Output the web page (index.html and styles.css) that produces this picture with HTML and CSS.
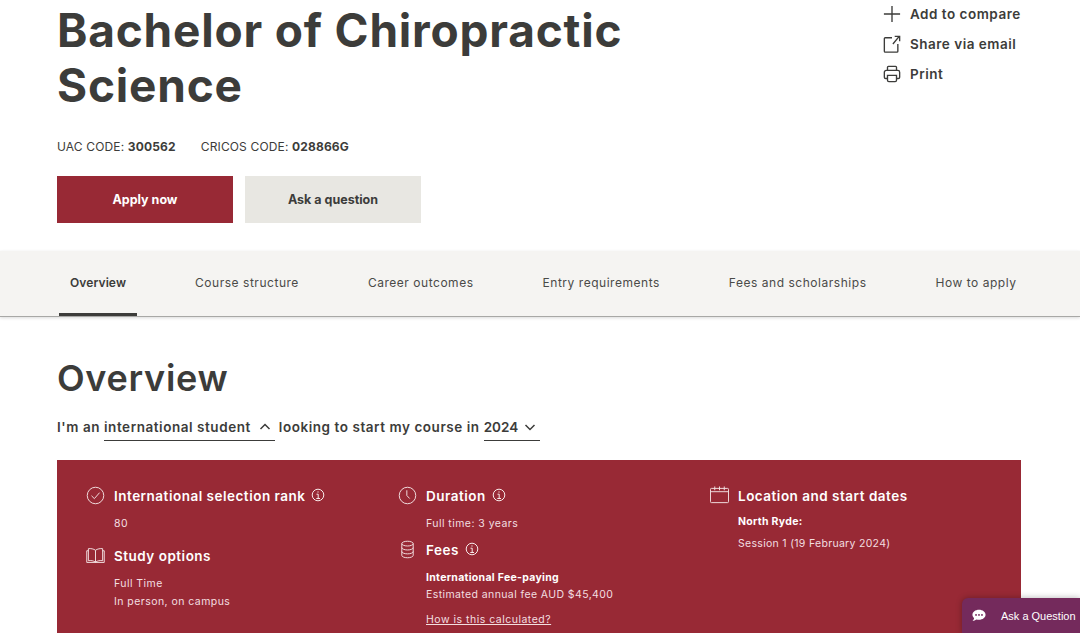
FILE: index.html
```html
<html>
  <head>
    <meta name="viewport" content="width=device-width,initial-scale=1">
    <link rel="stylesheet" href="styles.css">
  </head>

  <body>
    <header class="course_head">
      <div class="course_intro">
        <h1>Bachelor of Chiropractic Science</h1>
        <p class="codes">
          <span>UAC CODE: <b>300562</b></span>
          <span>CRICOS CODE: <b>028866G</b></span>
        </p>
        <div class="buttons">
          <a class="btn btn_primary">Apply now</a>
          <a class="btn btn_secondary">Ask a question</a>
        </div>
      </div>
      <ul class="actions">
        <li>
          <svg viewBox="0 0 20 20"><path d="M10 1v18M1 10h18"/></svg>
          Add to compare
        </li>
        <li>
          <svg viewBox="0 0 20 20"><path d="M10 3H2.500a1 1 0 0 0-1 1v14a1 1 0 0 0 1 1h13a1 1 0 0 0 1-1v-8M11 10l7-8.500M13 1.500h5.500V7"/></svg>
          Share via email
        </li>
        <li>
          <svg viewBox="0 0 20 20"><path d="M5 6V2.500a1 1 0 0 1 1-1h8a1 1 0 0 1 1 1V6M5 15H3a1.500 1.500 0 0 1-1.500-1.500V8A2 2 0 0 1 3.500 6h13a2 2 0 0 1 2 2v5.500A1.500 1.500 0 0 1 17 15h-2M5 11.500h10V17a1.500 1.500 0 0 1-1.500 1.500h-7A1.500 1.500 0 0 1 5 17z"/></svg>
          Print
        </li>
      </ul>
    </header>

    <nav class="tabs">
      <a class="tab tab_active">Overview</a>
      <a class="tab">Course structure</a>
      <a class="tab">Career outcomes</a>
      <a class="tab">Entry requirements</a>
      <a class="tab">Fees and scholarships</a>
      <a class="tab">How to apply</a>
    </nav>

    <main class="overview">
      <h2>Overview</h2>
      <p class="chooser">
        I'm an
        <span class="select">international student
          <svg viewBox="0 0 12 8"><path d="M1.500 6L6 1.500 10.500 6"/></svg>
        </span>
        looking to start my course in
        <span class="select select_year">2024
          <svg viewBox="0 0 12 8"><path d="M1.500 2L6 6.500 10.500 2"/></svg>
        </span>
      </p>

      <section class="panel">
        <div class="panel_col">
          <div class="fact">
            <svg class="fact_icon" viewBox="0 0 20 20"><circle cx="10" cy="10" r="8.700"/><path d="M5.800 10.300l3 3 5.500-6.300"/></svg>
            <h3>International selection rank <svg class="info" viewBox="0 0 14 14"><circle cx="7" cy="7" r="5.800"/><path d="M5.500 6.200H7.200V10.500M5.300 10.500H9M7 3.400v1.200"/></svg></h3>
            <p>80</p>
          </div>
          <div class="fact">
            <svg class="fact_icon" viewBox="0 0 20 20"><path d="M10 4.500C8 3 5 2.500 2.500 2.800V15.500C5 15 8 15.500 10 17C12 15.500 15 15 17.500 15.500V2.800C15 2.500 12 3 10 4.500ZM10 4.500V17M2.500 5H.8V17.300H19.200V5H17.500"/></svg>
            <h3>Study options</h3>
            <p>Full Time</p>
            <p class="line">In person, on campus</p>
          </div>
        </div>

        <div class="panel_col">
          <div class="fact">
            <svg class="fact_icon" viewBox="0 0 20 20"><circle cx="10" cy="10" r="8.700"/><path d="M9.300 4.500V10l3 3.200"/></svg>
            <h3>Duration <svg class="info" viewBox="0 0 14 14"><circle cx="7" cy="7" r="5.800"/><path d="M5.500 6.200H7.200V10.500M5.300 10.500H9M7 3.400v1.200"/></svg></h3>
            <p>Full time: 3 years</p>
          </div>
          <div class="fact fact_tight">
            <svg class="fact_icon" viewBox="0 0 20 20"><ellipse cx="10" cy="3.800" rx="6" ry="2.500"/><path d="M4 3.800V16.200C4 17.600 6.700 18.700 10 18.700S16 17.600 16 16.200V3.800M4 8C4 9.400 6.700 10.500 10 10.500S16 9.400 16 8M4 12.100C4 13.500 6.700 14.600 10 14.600S16 13.500 16 12.100"/></svg>
            <h3>Fees <svg class="info" viewBox="0 0 14 14"><circle cx="7" cy="7" r="5.800"/><path d="M5.500 6.200H7.200V10.500M5.300 10.500H9M7 3.400v1.200"/></svg></h3>
            <p class="strong">International Fee-paying</p>
            <p class="fee">Estimated annual fee AUD $45,400</p>
            <p class="calc"><a>How is this calculated?</a></p>
          </div>
        </div>

        <div class="panel_col">
          <div class="fact">
            <svg class="fact_icon" viewBox="0 0 20 20"><path d="M1.500 2.500h17a1 1 0 0 1 1 1v13a1 1 0 0 1-1 1h-17a1 1 0 0 1-1-1v-13a1 1 0 0 1 1-1zM.5 6h19M5 .5v4M10 .5v4M15 .5v4"/></svg>
            <h3>Location and start dates</h3>
            <p class="strong campus">North Ryde:</p>
            <p class="session">Session 1 (19 February 2024)</p>
          </div>
        </div>
      </section>
    </main>

    <a class="chat">
      <svg viewBox="0 0 16 14"><path d="M8 .5C3.800.5.500 3 .500 6.200c0 1.500.7 2.800 1.900 3.800-.2 1.200-1 2.300-1.900 3.200 1.700-.1 3.300-.7 4.500-1.700 1 .3 1.900.4 3 .4 4.200 0 7.500-2.600 7.500-5.700S12.200.5 8 .5z"/><circle class="dot" cx="4.600" cy="6.300" r="1.100"/><circle class="dot" cx="8" cy="6.300" r="1.100"/><circle class="dot" cx="11.400" cy="6.300" r="1.100"/></svg>
      Ask a Question
    </a>
  </body>
</html>
```

FILE: styles.css
```css
html, body {
    height: 633px;
    overflow: hidden;
}
body {
    margin: 0;
    font-family: 'Inter', 'Liberation Sans', sans-serif;
    color: #3c3c3a;
}
h1, h2, h3, p, ul {
    margin: 0;
    padding: 0;
}

/* top part */
.course_head {
    display: flex;
    justify-content: space-between;
    height: 251px;
    padding: 3px 59px 0 57px;
    box-sizing: border-box;
}
.course_intro {
    width: 640px;
}
h1 {
    font-size: 46px;
    line-height: 55px;
    font-weight: 700;
    letter-spacing: 0.8px;
}
.codes {
    display: flex;
    gap: 25px;
    margin-top: 26px;
    font-size: 12px;
    line-height: 16px;
    letter-spacing: 0.15px;
}
.codes b {
    font-weight: 700;
}
.buttons {
    display: flex;
    gap: 12px;
    margin-top: 21px;
}
.btn {
    display: flex;
    align-items: center;
    justify-content: center;
    width: 176px;
    height: 47px;
    font-size: 12.500px;
    font-weight: 700;
}
.btn_primary {
    background: #982935;
    color: #fff;
}
.btn_secondary {
    background: #e8e7e2;
}
.actions {
    list-style: none;
    width: 138px;
    margin-top: -4px;
}
.actions li {
    display: flex;
    align-items: center;
    gap: 9px;
    height: 30px;
    font-size: 13.500px;
    font-weight: 600;
    letter-spacing: 0.5px;
    white-space: nowrap;
}
.actions svg {
    width: 18px;
    height: 18px;
    flex: none;
    fill: none;
    stroke: #3c3c3a;
    stroke-width: 1.500;
}

/* tabs */
.tabs {
    display: flex;
    gap: 47px;
    height: 65px;
    padding-left: 59px;
    background: #f5f4f2;
    border-bottom: 1px solid #a8a8a6;
    box-shadow: 0 1px 3px rgba(0, 0, 0, 0.15);
}
.tab {
    display: flex;
    align-items: center;
    padding: 0 11px 2px;
    margin-bottom: 1px;
    font-size: 12px;
    letter-spacing: 0.53px;
    color: #4a4a48;
    white-space: nowrap;
}
.tab_active {
    font-weight: 600;
    letter-spacing: 0.1px;
    color: #3c3c3a;
    border-bottom: 3px solid #3c3c3a;
    margin-bottom: 0;
    padding-top: 1px;
    padding-bottom: 0;
}

/* overview */
.overview {
    padding: 0 59px 0 57px;
}
h2 {
    margin-top: 39px;
    font-size: 36px;
    line-height: 44px;
    font-weight: 600;
    letter-spacing: 0.7px;
}
.chooser {
    display: flex;
    gap: 4px;
    margin-top: 17px;
    font-size: 13.500px;
    line-height: 20px;
    font-weight: 600;
    letter-spacing: 0.55px;
}
.select {
    display: flex;
    align-items: center;
    gap: 7px;
    padding-bottom: 3px;
    padding-right: 4px;
    border-bottom: 1.500px solid #3c3c3a;
}
.select_year {
    gap: 5px;
    letter-spacing: 0;
}
.select svg {
    width: 12px;
    height: 8px;
    fill: none;
    stroke: #3c3c3a;
    stroke-width: 1.500;
    margin-left: 1px;
}
.panel {
    display: grid;
    grid-template-columns: 312px 312px 1fr;
    height: 173px;
    box-sizing: border-box;
    margin-top: 19px;
    padding: 26px 29px 0;
    background: #982935;
    color: #fff;
}
.fact {
    position: relative;
    padding-left: 28px;
    margin-bottom: 17px;
}
.fact_tight {
    margin-top: -6px;
}
.fact_icon {
    position: absolute;
    left: 0;
    top: 0;
    width: 19px;
    height: 19px;
    fill: none;
    stroke: #f3e3e4;
    stroke-width: 1;
}
.fact h3 {
    display: flex;
    align-items: center;
    gap: 6px;
    font-size: 13.500px;
    line-height: 20px;
    font-weight: 600;
    letter-spacing: 0.5px;
    white-space: nowrap;
}
.info {
    width: 14px;
    height: 14px;
    margin-top: -2px;
    fill: none;
    stroke: #f8eaea;
    stroke-width: 1;
}
.fact p {
    margin-top: 13px;
    font-size: 10.500px;
    line-height: 10px;
    letter-spacing: 0.45px;
    color: #f3dfe0;
    white-space: nowrap;
}
.fact p.line {
    margin-top: 8px;
}
.fact p.strong {
    font-weight: 700;
    letter-spacing: 0.3px;
    color: #fff;
    margin-top: 13px;
}
.fact p.fee {
    margin-top: 7px;
    letter-spacing: 0.4px;
}
.fact p.campus {
    margin-top: 11px;
}
.fact p.session {
    margin-top: 12px;
    letter-spacing: 0.3px;
}
.fact p.calc {
    margin-top: 15px;
    letter-spacing: 0.5px;
}
.calc a {
    text-decoration: underline;
}

/* chat tab sits over the page */
.chat {
    position: absolute;
    right: 0;
    bottom: 0;
    display: flex;
    align-items: center;
    gap: 15px;
    width: 118px;
    height: 35px;
    padding-left: 10px;
    box-sizing: border-box;
    background: #742a5c;
    border-top-left-radius: 6px;
    box-shadow: 0 0 6px rgba(0, 0, 0, 0.3);
    color: #fff;
    font-family: 'Liberation Sans', sans-serif;
    font-size: 11px;
    white-space: nowrap;
}
.chat svg {
    width: 14px;
    height: 13px;
    flex: none;
    fill: #fff;
}
.chat .dot {
    fill: #742a5c;
}
```
